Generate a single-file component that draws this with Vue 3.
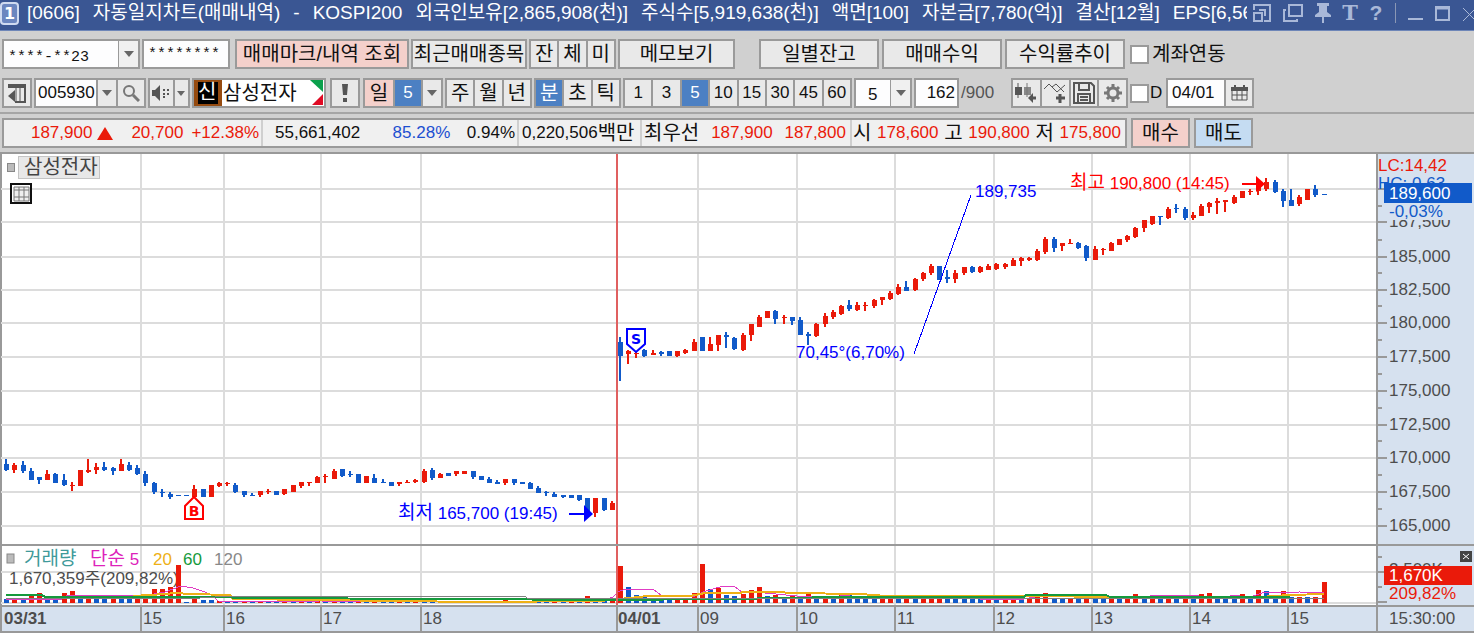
<script setup>
import { ref } from 'vue'

const infoParts = [
  '[0606]', '자동일지차트(매매내역)', '-', 'KOSPI200', '외국인보유[2,865,908(천)]',
  '주식수[5,919,638(천)]', '액면[100]', '자본금[7,780(억)]', '결산[12월]', 'EPS[6,564]',
]
const account = ref('****-**23')
const secret = ref('********')
const code = ref('005930')
const shown = ref('162')
const date = ref('04/01')
const minutes = ['1', '3', '5', '10', '15', '30', '45', '60']

// Candle geometry: [wick top, body top, body bottom, wick bottom, falling?], in thirds of a pixel
const STEP = 8.182
const cx = (i) => Math.round(6.3 + STEP * i)
const B = 1
const session = (base, start, rows) =>
  rows.map(([h, t, b, l, down], k) => {
    const y = (v) => Math.round(base + v / 3)
    return { x: cx(start + k), h: y(h), t: y(t), b: Math.max(y(b), y(t) + 1), l: y(l), c: down ? 'down' : 'up' }
  })
const candles = [
  ...session(286, 0, [
    [57, 72, 91, 94, B], [70, 75, 90, 98], [62, 75, 94, 98, B], [85, 94, 121, 121, B], [112, 112, 121, 133, B],
    [89, 102, 121, 121], [98, 102, 130, 130, B], [102, 121, 134, 138, B], [125, 135, 138, 152], [89, 89, 138, 138],
    [57, 89, 95, 98], [70, 80, 89, 102], [66, 80, 90, 94, B], [80, 83, 93, 106, B], [57, 71, 94, 94],
    [66, 75, 91, 94, B], [75, 85, 102, 106, B], [94, 102, 130, 138, B], [125, 130, 157, 161, B], [148, 157, 160, 170, B],
    [157, 162, 170, 178, B], [166, 166, 169, 169, B], [166, 166, 169, 169, B], [134, 148, 170, 170], [148, 148, 170, 170, B],
    [134, 134, 170, 170], [125, 130, 138, 140], [125, 130, 133, 138], [130, 134, 157, 160, B], [152, 152, 165, 170, B],
    [160, 166, 169, 169, B], [152, 152, 165, 170], [148, 153, 156, 161], [152, 152, 165, 165, B], [148, 148, 162, 165],
    [134, 134, 156, 156], [125, 125, 138, 143], [125, 125, 129, 138], [107, 112, 129, 129], [102, 108, 112, 129],
    [88, 94, 116, 116], [88, 88, 107, 111, B], [94, 102, 106, 112, B], [102, 102, 129, 129, B], [107, 107, 129, 129],
    [102, 115, 129, 129, B], [116, 125, 129, 129, B], [125, 125, 137, 137, B], [125, 125, 133, 138], [121, 125, 129, 129],
    [116, 120, 125, 130], [88, 94, 125, 129], [85, 89, 115, 120, B], [98, 103, 115, 115], [98, 98, 107, 107, B],
    [94, 94, 101, 107], [94, 94, 102, 102], [94, 94, 111, 116, B], [107, 107, 120, 120, B], [112, 116, 130, 130, B],
    [121, 125, 133, 133, B], [116, 116, 130, 134], [116, 116, 129, 134, B], [125, 125, 133, 133, B], [125, 130, 147, 147, B],
    [138, 144, 160, 160, B], [152, 157, 160, 167, B], [157, 161, 170, 170, B], [166, 166, 170, 174, B], [166, 166, 173, 173, B],
    [166, 166, 179, 183, B], [174, 174, 220, 220, B], [174, 174, 220, 232], [174, 174, 210, 214, B], [184, 188, 211, 211],
  ]),
  ...session(156, 75, [
    [80, 97, 137, 213, B], [120, 124, 132, 163], [120, 130, 133, 145], [116, 120, 138, 142, B], [120, 130, 136, 136],
    [124, 126, 133, 137, B], [124, 124, 137, 137, B], [124, 124, 137, 141], [118, 121, 130, 132], [88, 97, 124, 124],
    [80, 80, 124, 124, B], [80, 101, 123, 123], [74, 74, 106, 124], [66, 75, 82, 115, B], [80, 83, 118, 120, B],
    [70, 74, 120, 124], [43, 43, 74, 92], [15, 20, 51, 51], [2, 2, 24, 24], [0, 2, 28, 42, B],
    [16, 21, 24, 42], [20, 20, 34, 46, B], [20, 29, 74, 74, B], [66, 71, 77, 106, B], [38, 42, 78, 82],
  ]),
  ...session(1, 100, [
    [475, 484, 508, 516], [466, 472, 486, 493], [449, 454, 476, 480], [436, 449, 463, 467, B], [440, 449, 464, 467],
    [440, 450, 454, 467], [432, 436, 454, 458], [427, 427, 435, 449], [408, 413, 431, 435], [386, 395, 417, 421],
    [377, 395, 408, 408, B], [368, 373, 405, 408], [350, 354, 372, 377], [328, 332, 355, 359], [332, 332, 374, 374, B],
    [346, 366, 372, 385, B], [346, 354, 372, 385], [336, 336, 355, 359], [332, 336, 350, 354, B], [332, 336, 350, 354],
    [328, 332, 344, 346], [323, 328, 342, 346], [323, 328, 337, 341], [310, 314, 332, 332], [305, 310, 318, 332],
    [305, 310, 314, 318], [283, 287, 314, 318], [247, 251, 292, 296], [247, 251, 278, 291, B], [265, 265, 272, 287],
    [251, 265, 268, 268], [260, 265, 279, 283, B], [270, 274, 310, 318, B], [274, 283, 314, 314], [279, 283, 286, 300],
    [260, 265, 287, 287], [251, 251, 269, 269], [241, 243, 255, 260], [216, 220, 246, 250], [194, 194, 219, 232],
    [184, 184, 206, 209], [184, 184, 187, 209, B], [157, 161, 188, 192], [148, 158, 163, 174, B], [157, 161, 188, 196, B],
    [170, 179, 188, 196], [148, 152, 184, 184], [140, 144, 157, 174], [130, 139, 143, 178], [134, 134, 142, 170],
    [121, 125, 143, 148], [107, 107, 129, 129], [102, 107, 112, 120], [85, 95, 107, 120], [68, 80, 103, 107],
    [76, 80, 111, 115, B], [102, 107, 138, 156, B], [102, 135, 152, 152, B], [121, 125, 148, 152], [102, 102, 134, 134],
    [90, 103, 120, 125, B], [117, 117, 120, 120, B],
  ]),
]

// Volume bars: direction letter followed by the bar height
const volumes = (
  'b4 r5 b4 r8 r10 b5 b5 r10 r12 b5 r5 b5 b5 r5 b5 b5 r5 r9 r14 r14 r16 r38 b1 r4 b3 b3 r2 b2 b2 r2 b2 r2 b2 b2 r3 b2 r2 b2 r2 b2 ' +
  'r2 b2 b2 r2 b2 r2 b1 b1 r1 b1 r1 b1 b2 b1 r1 b1 r1 b1 b1 r1 b1 r3 b1 r1 b1 b1 b1 r2 b2 r2 b2 r7 b2 b2 r2 ' +
  'r37 b16 b8 b7 b5 b4 b4 r3 r3 r10 r39 b14 r15 b8 b7 r9 r13 r16 b7 r8 b5 r8 b5 r9 b5 r5 b5 r8 b9 b5 b5 b5 r5 r5 b5 r8 b5 r5 r8 r8 ' +
  'b5 b5 b5 b5 b4 r4 b4 r4 r5 b4 r5 r8 r10 b5 b5 r5 b5 r8 b5 b5 r5 b5 r5 r9 b5 r5 b5 r5 b5 r5 b5 r9 r10 b5 b5 b5 r9 b5 r13 b12 b6 r12 b6 r6 b6 r6 r21'
).split(' ').slice(0, 162).map((s, i) => ({ x: cx(i), h: Number(s.slice(1)), c: s[0] === 'r' ? 'up' : 'down' }))

const averages = [
  { c: 'ma5', d: '6,53 40,53 60,54 68,49 100,49 148,49 165,46 181,40 193,42 205,46 212,49 218,55 270,56 320,55 470,56 600,55 613,51 618,46 625,43 653,43 662,50 695,50 703,46 713,43 723,40 734,40 742,46 765,47 797,50 840,50 860,48 900,50 980,53 1024,53 1040,50 1072,50 1100,51 1200,49 1230,49 1250,51 1262,47 1300,46 1324,47' },
  { c: 'ma20', d: '133,50 165,48 175,47 190,48 230,49 233,53 320,54 476,56 600,55 648,50 690,50 705,47 738,47 745,46 780,46 790,47 860,48 886,50 1260,51 1290,49 1324,48' },
  { c: 'ma60', d: '6,49 42,49 45,51 230,51 235,52 460,53 600,54 730,53 840,51 1024,51 1026,49 1106,49 1110,51 1290,51' },
  { c: 'ma120', d: '6,52 200,52 230,50 525,50 527,52 1324,52' },
]

const rows = [35, 68, 103, 136, 169, 203, 237, 271, 304, 338, 372]
const midTicks = [52, 86, 119, 152, 186, 220, 254, 287, 321, 355]
const prices = ['187,500', '185,000', '182,500', '180,000', '177,500', '175,000', '172,500', '170,000', '167,500', '165,000']
  .map((label, i) => ({ label, y: rows[i + 1] }))
const cols = [141, 224, 321, 421, 698, 797, 895, 994, 1092, 1190, 1288]
const hours = [
  { x: 3, t: '03/31', day: true }, { x: 141, t: '15' }, { x: 224, t: '16' }, { x: 321, t: '17' }, { x: 421, t: '18' },
  { x: 617, t: '04/01', day: true }, { x: 698, t: '09' }, { x: 797, t: '10' }, { x: 895, t: '11' }, { x: 994, t: '12' },
  { x: 1092, t: '13' }, { x: 1190, t: '14' }, { x: 1288, t: '15' },
]
</script>

<template>
  <main class="window">
    <header class="title">
      <span class="num">1</span>
      <h1 class="caption"><span v-for="p in infoParts" :key="p">{{ p }}</span></h1>
      <nav class="wintools">
        <button aria-label="분리"><svg width="18" height="18"><path d="M1 6V1h16v16h-6" class="l2" /><path d="M1 9h8v8H1z" class="l2" /><path d="M6 6h6v6" class="l2" /></svg></button>
        <button aria-label="복제"><svg width="20" height="18"><path d="M6 1h13v11H6z" class="l2" /><path d="M3 6H1v11h13v-2" class="l2" /></svg></button>
        <button aria-label="고정"><svg width="16" height="22"><path d="M2 1h12v3h-2v6l4 3v2H0v-2l4-3V4H2z" class="fl" /><path d="M8 15v6" class="l2" /></svg></button>
        <button class="glyph serif">T</button>
        <button class="glyph">?</button>
        <i class="bar"></i>
        <button aria-label="최소화"><svg width="15" height="18"><path d="M0 15h15" class="l2" /></svg></button>
        <button aria-label="최대화"><svg width="15" height="18"><path d="M1 3h13v13H1z" class="l2" /><path d="M0 4h15" class="l3" /></svg></button>
        <button aria-label="닫기"><svg width="14" height="18"><path d="M1 4l13 13M14 4L1 17" class="l1" /></svg></button>
      </nav>
    </header>

    <section class="tools">
      <div class="row">
        <div class="combo account">
          <select v-model="account" aria-label="계좌"><option>****-**23</option></select>
          <span class="arrow"></span>
        </div>
        <input v-model="secret" class="field secret" aria-label="비밀번호" />
        <button class="btn pink inquiry">매매마크/내역 조회</button>
        <button class="btn recent">최근매매종목</button>
        <div class="seg"><button>잔</button><button>체</button><button>미</button></div>
        <button class="btn memo">메모보기</button>
        <div class="trio">
          <button class="btn">일별잔고</button>
          <button class="btn">매매수익</button>
          <button class="btn">수익률추이</button>
        </div>
        <label class="check"><input type="checkbox" />계좌연동</label>
      </div>

      <div class="row">
        <button class="btn icon" aria-label="패널"><svg width="18" height="19"><path d="M0 0h18v4H0z" class="k" /><path d="M17 3v15H7" class="s2" /><path d="M8 4v13M12 4v13" class="s1" /><path d="M0 12l7-6v12z" class="k" /></svg></button>
        <div class="group code">
          <input v-model="code" aria-label="종목코드" />
          <button class="drop" aria-label="종목 목록"><i></i></button>
          <button class="find" aria-label="검색"><svg width="18" height="18"><circle cx="7" cy="7" r="5" class="g2" /><path d="M11 11l6 6" class="g3" /></svg></button>
        </div>
        <div class="group sound">
          <button aria-label="음성"><svg width="18" height="16"><path d="M0 5h3l5-5v16l-5-5H0z" class="k" /><path d="M11 5h2M11 9h2M15 5h2M15 9h2M11 12h2" class="s2" /></svg></button>
          <button class="drop small" aria-label="음성 설정"><i></i></button>
        </div>
        <div class="stock"><b>신</b><span>삼성전자</span><svg width="14" height="26"><path d="M0 0h13v12z" fill="#0ba04c" /><path d="M13 14v11H2z" fill="#e00a24" /></svg></div>
        <button class="btn icon bang" aria-label="알림"><svg width="6" height="18"><path d="M0 0h6L5 11H1zM1 14h4v4H1z" class="k" /></svg></button>
        <div class="group period">
          <button class="pink">일</button>
          <button class="on n">5</button>
          <button class="drop" aria-label="기간"><i></i></button>
        </div>
        <div class="seg"><button>주</button><button>월</button><button>년</button></div>
        <div class="seg"><button class="on">분</button><button>초</button><button>틱</button></div>
        <div class="seg mins"><button v-for="m in minutes" :key="m" class="n" :class="{ on: m === '5' }">{{ m }}</button></div>
        <div class="combo unit">
          <select aria-label="간격"><option>5</option></select>
          <span class="arrow"></span>
        </div>
        <input v-model="shown" class="field shown" aria-label="표시 봉수" />
        <span class="total">/900</span>
        <div class="seg icons">
          <button aria-label="봉 추가"><svg width="22" height="20"><path d="M0 4h7v8H0z" class="k" /><path d="M3 0v15" class="s1" /><path d="M9 4h7v8H9z" class="gf" /><path d="M12 0v14" class="g1" /><path d="M13 15l5-5v10z" class="k" /><path d="M16 15h5" class="s3" /></svg></button>
          <button aria-label="지표 추가"><svg width="22" height="20"><path d="M0 6l5-5 8 8 8-7M8 4l4-3 8 8" class="s1" /><path d="M12 15h9M16 11v9" class="s3" /></svg></button>
          <button aria-label="저장"><svg width="22" height="22"><path d="M1 1h17l3 3v17H1z" class="s2" /><path d="M6 1v7h10V1M5 21v-9h12v9M7 15h8M7 18h8" class="s2" /></svg></button>
          <button aria-label="설정"><svg width="18" height="18"><circle cx="9" cy="9" r="5" class="g3" /><path d="M9 0v3M9 15v3M0 9h3M15 9h3M3 3l2 2M13 13l2 2M15 3l-2 2M3 15l2-2" class="g3" /></svg></button>
        </div>
        <label class="check n"><input type="checkbox" />D</label>
        <div class="group date">
          <input v-model="date" aria-label="날짜" />
          <button aria-label="달력"><svg width="17" height="16"><path d="M0 2h17v4H0zM3 0h2v3H3zM12 0h2v3h-2z" class="k" /><path d="M1 6v9h15V6M6 6v9M11 6v9M1 10h15" class="s1" /></svg></button>
        </div>
      </div>
    </section>

    <section class="quote">
      <div class="strip">
        <div class="c1 up"><span>187,900</span><i class="tri"></i><span>20,700</span><span class="q3">+12.38%</span></div>
        <div class="c2"><span>55,661,402</span><span class="blue q5">85.28%</span><span>0.94%</span></div>
        <div class="c3">0,220,506<b>백만</b></div>
        <div class="c4"><b>최우선</b><span class="up">187,900</span><span class="up">187,800</span></div>
        <div class="c5"><b>시</b><span class="up">178,600</span><b>고</b><span class="up">190,800</span><b>저</b><span class="up">175,800</span></div>
      </div>
      <button class="btn pink trade">매수</button>
      <button class="btn sky trade">매도</button>
    </section>

    <section class="chart">
      <div class="plot">
        <svg class="price">
          <line v-for="y in rows" :key="'r' + y" x1="1" :y1="y" x2="100%" :y2="y" class="grid" />
          <line v-for="x in cols" :key="'c' + x" :x1="x" y1="0" :x2="x" y2="100%" class="grid" />
          <g v-for="(k, i) in candles" :key="i" :class="k.c" shape-rendering="crispEdges">
            <rect :x="k.x - 1" :y="k.h" width="2" :height="k.l - k.h" class="wick" />
            <rect :x="k.x - 2" :y="k.t" width="5" :height="k.b - k.t" />
          </g>
          <line x1="617" y1="0" x2="617" y2="100%" class="today" />
          <path d="M914 200L971 41" class="trend" />
          <text x="975" y="43" class="t blue2">189,735</text>
          <text x="796" y="204" class="t blue2">70,45°(6,70%)</text>
          <text x="1070" y="35" class="t red2"><tspan class="ko">최고</tspan> 190,800 (14:45)</text>
          <path d="M1242 30h16" stroke="#f00" stroke-width="2" /><path d="M1256 22v16l9-8z" fill="#f00" />
          <text x="398" y="365" class="t blue2"><tspan class="ko">최저</tspan> 165,700 (19:45)</text>
          <path d="M569 360h16" stroke="#00f" stroke-width="2" /><path d="M584 351v17l9-8z" fill="#00f" />
          <path d="M627 175h18v15l-9 8-9-8z" class="sell" /><text x="636" y="190" class="mark blue2">S</text>
          <path d="M194 343l9 9v13h-18v-13z" class="buy" /><text x="194" y="362" class="mark red2">B</text>
        </svg>
        <div class="legend"><i></i><span>삼성전자</span></div>
        <button class="grid-btn" aria-label="표 보기"><svg width="17" height="16"><path d="M1 1h15v14H1zM6 1v14M11 1v14M1 4h15M1 11h15" /></svg></button>
      </div>
      <div class="axis">
        <svg>
          <line v-for="y in rows" :key="y" x1="0" :y1="y" x2="9" :y2="y" class="tick" />
          <line v-for="y in midTicks" :key="y" x1="0" :y1="y" x2="4" :y2="y" class="tick" />
          <text v-for="p in prices" :key="p.label" x="11" :y="p.y + 5" class="t ax">{{ p.label }}</text>
          <rect x="6" y="49" width="88" height="17" fill="#d6e1ef" />
          <text x="0" y="17" class="t ax-red">LC:14,42</text>
          <text x="0" y="35" class="t ax-blue">HC: 0,63</text>
          <rect x="6" y="29" width="88" height="20" fill="#115ac9" />
          <text x="11" y="45" class="t ax-white">189,600</text>
          <text x="11" y="63" class="t ax-blue">-0,03%</text>
        </svg>
      </div>
      <div class="plot">
        <svg class="volume">
          <line x1="1" y1="26" x2="100%" y2="26" class="grid" />
          <line v-for="x in cols" :key="x" :x1="x" y1="0" :x2="x" y2="100%" class="grid" />
          <line x1="1" y1="57" x2="100%" y2="57" class="grid" />
          <text x="24" y="19" class="t ko teal">거래량</text>
          <text x="90" y="19" class="t magenta"><tspan class="ko">단순</tspan> 5</text>
          <text x="153" y="19" class="t gold">20</text>
          <text x="183" y="19" class="t green">60</text>
          <text x="214" y="19" class="t gray">120</text>
          <rect x="7" y="8" width="7" height="9" class="chip" />
          <text x="9" y="38" class="t ax">1,670,359주(209,82%)</text>
          <rect v-for="(v, i) in volumes" :key="i" :x="v.x - 2" :y="57 - v.h" width="5" :height="v.h" :class="v.c" shape-rendering="crispEdges" />
          <polyline v-for="a in averages" :key="a.c" :points="a.d" :class="['ma', a.c]" />
          <line x1="617" y1="0" x2="617" y2="100%" class="today" />
        </svg>
      </div>
      <div class="axis">
        <svg>
          <path d="M0 11h4M0 26h9M0 41h4M0 56h9" class="tick" />
          <text x="11" y="29" class="t ax">2,500K</text>
          <rect x="6" y="20" width="88" height="19" fill="#ea1a0a" />
          <text x="11" y="35" class="t ax-white">1,670K</text>
          <text x="11" y="53" class="t ax-red">209,82%</text>
          <rect x="82" y="5" width="12" height="11" fill="#444" /><path d="M85 8l6 5M91 8l-6 5" stroke="#fff" />
        </svg>
      </div>
      <div class="plot times">
        <svg>
          <g v-for="h in hours" :key="h.x">
            <line v-if="h.x > 3" :x1="h.x" y1="0" :x2="h.x" y2="100%" class="tick" />
            <text :x="h.x + (h.day ? 1 : 2)" y="17" :class="['t ax', { day: h.day }]">{{ h.t }}</text>
          </g>
        </svg>
      </div>
      <div class="axis times"><svg><text x="11" y="17" class="t ax">15:30:00</text></svg></div>
    </section>
  </main>
</template>

<style>
body { margin: 0; background: #d0d0d0; }
</style>

<style scoped>
* { box-sizing: border-box; }
.window, button, input, select {
  font-family: "Liberation Sans", "Noto Sans CJK KR", sans-serif;
  font-size: 20px;
  line-height: 26px;
  color: #111;
}
input, select, .n, .total { font-size: 17px; }
button, input, select { margin: 0; padding: 0; border: 0; background: none; border-radius: 0; outline: 0; appearance: none; }
button { white-space: nowrap; display: flex; align-items: center; justify-content: center; }
.window { background: #d0d0d0; overflow: hidden; }

.title { height: 31px; background: #3a5693; display: flex; align-items: center; color: #fff; padding-bottom: 4px; border-bottom: 1px solid #6e86b8; }
.num { width: 19px; height: 23px; margin: 0 8px 0 0; border: 2px solid #cfdaf0; border-radius: 4px; background: #6b86c0; font: bold 16px/19px "DejaVu Sans", sans-serif; text-align: center; flex: none; }
.caption { margin: 0; font-size: 19px; font-weight: 400; line-height: 26px; flex: 1; display: flex; gap: 13px; white-space: nowrap; overflow: hidden; }
.wintools { flex: none; display: flex; align-items: center; gap: 12px; padding-left: 6px; margin-right: -2px; }
.wintools svg { display: block; }
.glyph { font: bold 21px/24px "Liberation Sans", sans-serif; color: #a9b8d8; width: 14px; }
.serif { font-family: "DejaVu Serif", serif; }
.bar { width: 1px; height: 20px; background: #8a97b5; }
.l1, .l2, .l3 { fill: none; stroke: #a9b8d8; stroke-width: 2; }
.l3 { stroke-width: 3; }
.l1 { stroke-width: 1; }
.fl { fill: #a9b8d8; }

.tools { padding: 8px 2px 4px; border-bottom: 2px solid #a5a5a5; }
.row { display: flex; gap: 2px; height: 30px; }
.row + .row { margin-top: 9px; }
.btn, .combo, .field, .seg, .group, .stock { border: 2px solid #9a9a9a; background: #e9e9e9; height: 30px; flex: none; }
.field, .combo { background: #fdfdfe; }
.pink { background: #f4d0cb; }
.sky { background: #c5dcf2; }
.combo { position: relative; }
.combo select { width: 100%; height: 26px; padding-left: 4px; }
.arrow { position: absolute; right: 0; top: 0; width: 20px; height: 26px; background: #f0f0f0; border-left: 1px solid #9a9a9a; pointer-events: none; }
.arrow::after, .drop i { content: ""; display: block; border: 5px solid transparent; border-top: 6px solid #666; border-bottom: 0; }
.arrow::after { margin: 10px auto 0; width: 0; }
.account { width: 138px; }
.account select, .secret { font-family: "Liberation Mono", monospace; font-size: 15px; }
.secret { width: 88px; padding-left: 4px; }
.inquiry { width: 174px; margin-left: 3px; }
.recent { width: 116px; }
.memo { width: 117px; }
.trio { display: flex; gap: 3px; margin: 0 3px 0 22px; }
.trio .btn { width: 120px; }
.seg { display: flex; width: 87px; }
.seg button { flex: 1; height: 26px; min-width: 0; }
.seg button + button, .group > * + * { border-left: 2px solid #9a9a9a; }
.on, .seg .on { background: #4c80c3; color: #fff; }
.check { display: flex; align-items: center; gap: 3px; white-space: nowrap; }
.check input { width: 19px; height: 19px; border: 2px solid #9a9a9a; background: #fff; }
.check.n { gap: 1px; width: 34px; }

.group { display: flex; }
.group input { min-width: 0; flex: 1; height: 26px; background: #fdfdfe; padding-left: 2px; }
.group button { height: 26px; width: 28px; }
.group .drop { width: 20px; }
.group .small { width: 16px; }
.small i { border-width: 5px 4px 0; }
.icon { width: 30px; }
.code { width: 112px; }
.sound { width: 42px; }
.sound button:first-child { width: 24px; }
.stock { width: 134px; display: flex; background: #fff; white-space: nowrap; }
.stock b { width: 28px; border: 4px solid #964b10; border-width: 2px 4px; background: #000; color: #fff; font-weight: 400; line-height: 21px; }
.stock span { flex: 1; padding-left: 1px; }
.bang { margin: 0 1px 0 2px; }
.period { width: 80px; }
.mins { width: 229px; }
.unit { width: 58px; }
.unit select { padding-left: 12px; }
.shown { width: 45px; text-align: right; padding-right: 2px; }
.total { width: 48px; color: #555; line-height: 30px; }
.icons { width: 117px; }
.date { width: 88px; }
.date input { padding-left: 4px; }

.k { fill: #555; }
.gf { fill: #888; }
.s1, .s2, .s3, .g1, .g2, .g3 { fill: none; stroke: #555; stroke-width: 1; }
.s2, .g2 { stroke-width: 2; }
.s3, .g3 { stroke-width: 3; }
.g1, .g2, .g3 { stroke: #777; }

.quote { display: flex; gap: 4px; padding: 4px 2px; }
.strip { width: 1125px; height: 30px; border: 2px solid #9a9a9a; background: #f0f0f0; display: flex; white-space: nowrap; font-size: 17px; }
.strip > div { display: flex; align-items: center; flex: none; }
.strip > div + div { border-left: 2px solid #cfcfcf; }
.strip b { font-weight: 400; font-size: 20px; }
.up { color: #ea1a0a; }
.blue { color: #1c4fd0; }
.strip .c1 { width: 257px; justify-content: flex-end; padding-right: 2px; }
.tri { border: 8px solid transparent; border-bottom: 13px solid #ea1a0a; border-top: 0; margin: 0 18px 0 5px; }
.q3 { margin-left: 8px; }
.strip .c2 { width: 256px; padding: 0 2px 0 12px; justify-content: space-between; }
.q5 { margin-left: 16px; }
.strip .c3 { width: 123px; padding-left: 3px; }
.strip .c4 { width: 210px; justify-content: space-between; padding: 0 4px 0 2px; }
.strip .c5 { flex: 1; justify-content: space-between; padding: 0 4px 0 1px; }
.trade { width: 59px; }

.chart { display: grid; grid-template-columns: 1fr 98px; grid-template-rows: 392px 61px 26px; border-top: 2px solid #999; }
.plot, .axis { position: relative; border-bottom: 2px solid #999; min-width: 0; }
.plot { background: #fff; border-left: 2px solid #999; }
.axis, .times { background: #d6e1ef; }
.axis { border-left: 2px solid #999; }
.plot svg, .axis svg { display: block; width: 100%; height: 100%; overflow: hidden; }
.plot > svg { margin-left: -2px; width: calc(100% + 2px); }
.grid { stroke: #dcdcdc; stroke-width: 2; }
.tick { stroke: #999; stroke-width: 2; fill: none; }
.today { stroke: #e06060; stroke-width: 2; }
rect.up, g.up rect { fill: #ea1a0a; }
rect.down, g.down rect { fill: #115ac9; }
.t { font-size: 17px; }
.ko { font-size: 19px; }
.blue2 { fill: #00f; }
.red2 { fill: #f00; }
.ax { fill: #4d4d4d; }
.ax-red { fill: #ea1a0a; }
.ax-blue { fill: #115ac9; }
.ax-white { fill: #fff; }
.day { font-weight: 700; }
.teal { fill: #3f9a9a; }
.magenta { fill: #dd22bb; }
.gold { fill: #eeb016; }
.green { fill: #149a3c; }
.gray { fill: #888; }
.trend { stroke: #00f; stroke-width: 1; fill: none; shape-rendering: crispEdges; }
.sell, .buy { fill: #fff; stroke: #00f; stroke-width: 2; }
.buy { stroke: #f00; }
.mark { font: bold 14px "DejaVu Sans", sans-serif; text-anchor: middle; }
.ma { fill: none; stroke-width: 1; shape-rendering: crispEdges; }
.ma5 { stroke: #e03cc4; }
.ma20 { stroke: #eeb016; stroke-width: 2; }
.ma60 { stroke: #149a3c; stroke-width: 2; }
.ma120 { stroke: #808080; }
.chip { fill: #bbb; stroke: #888; }
.legend { position: absolute; left: 5px; top: 2px; display: flex; align-items: center; gap: 3px; }
.legend i { width: 8px; height: 9px; background: #bbb; border: 1px solid #888; }
.legend span { width: 82px; height: 23px; line-height: 20px; padding-left: 5px; border: 1px solid #c4c4c4; background: #e8e8e8; color: #444; white-space: nowrap; }
.grid-btn { position: absolute; left: 8px; top: 29px; width: 22px; height: 21px; border: 2px solid #111; background: #fff; }
.plot .grid-btn svg { width: 17px; height: 16px; flex: none; fill: #eee; stroke: #777; }
</style>
